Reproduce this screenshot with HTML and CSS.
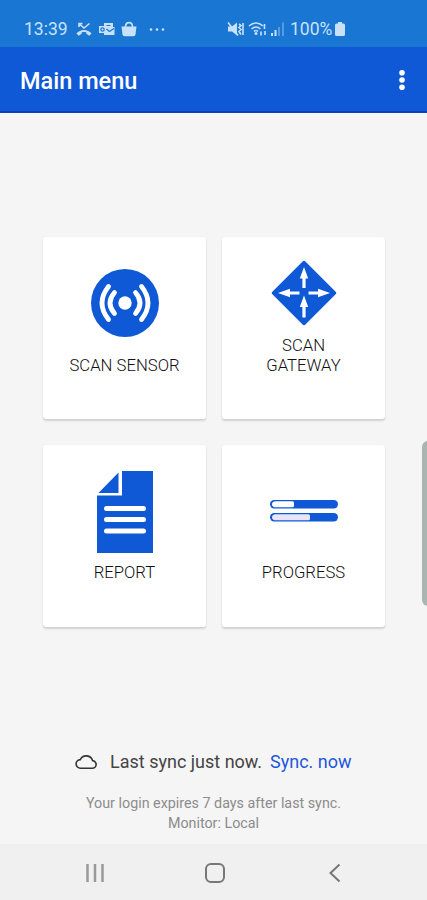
FILE: index.html
```html
<!DOCTYPE html>
<html lang="en">
  <head>
    <meta charset="UTF-8" />
    <meta name="viewport" content="width=device-width, initial-scale=1.0" />
    <title>Main menu</title>
    <link rel="stylesheet" href="styles.css">
  </head>
  <body>
    <div class="status-bar">
      <span class="status-time">13:39</span>
      <svg class="status-left" width="92" height="16" viewBox="0 0 92 16">
        <!-- missed call -->
        <path d="M.5 12.500C4 7.800 12 7.800 15.500 12.500L13.300 14.800L10.300 12.800V11.300Q8 10.700 5.700 11.300V12.800L2.700 14.800Z" />
        <path class="line" d="M3 6V2.500H6.500M3.500 3L8 7L13.500 2.500" />
        <!-- mail -->
        <path d="M28 2h9v4h1.500v8H28v-2h-5V5h5z" />
        <path class="cut" d="M30.500 8l3 2.500L38 7.500M30.500 4.500h4" />
        <circle class="cut" cx="26.500" cy="8.500" r="1.700" />
        <!-- bag -->
        <path d="M45.500 5.500h15l-1 8q-.3 1.800-2 1.800h-9q-1.700 0-2-1.800z" />
        <path class="line" d="M49.500 6c0-5.800 7-5.800 7 0" />
        <circle cx="75" cy="8.500" r="1.300" /><circle cx="81" cy="8.500" r="1.300" /><circle cx="87" cy="8.500" r="1.300" />
      </svg>
      <svg class="status-right" width="60" height="16" viewBox="0 0 60 16">
        <!-- muted -->
        <path d="M1 5.500h4l5-4v13l-5-4H1z" />
        <path class="line" d="M1 1.500l10 13M12 3l2 1.500-2 2 2 2-2 2 2 3M16 2v12" />
        <!-- wifi -->
        <path class="line" d="M22 5q7-6 14 0M24.500 8q4.500-4 9 0M27 10.500q2-2 4 0M37.500 3v5M34 10.500v4M38 10v4" />
        <circle cx="29" cy="12.500" r="1.500" />
        <!-- signal -->
        <path d="M44 12h2v3h-2zM47.500 9h2v6h-2z" />
        <path class="dim" d="M51 6h2v9h-2zM55 1.500h2V15h-2z" />
      </svg>
      <span class="status-percent">100%</span>
      <svg class="battery" width="12" height="16" viewBox="0 0 12 16">
        <path d="M4 1h4v1.500h1.500q1.500 0 1.500 1.500v9.500q0 1.500-1.500 1.500h-7Q1 15 1 13.500V4q0-1.500 1.500-1.500H4z" />
      </svg>
    </div>

    <header class="app-bar">
      <h1>Main menu</h1>
      <svg class="more" width="8" height="24" viewBox="0 0 8 24">
        <circle cx="4" cy="4.700" r="2.800" /><circle cx="4" cy="12" r="2.800" /><circle cx="4" cy="19.300" r="2.800" />
      </svg>
    </header>

    <main class="menu">
      <div class="card">
        <svg class="icon icon-sensor" width="68" height="68" viewBox="0 0 68 68">
          <circle cx="34" cy="34" r="34" />
          <circle class="white" cx="34" cy="34" r="6.700" />
          <path class="wave" d="M23.500 23.500Q14.500 34 23.500 44.500M17.500 17.500Q4.500 34 17.500 50.500M44.500 23.500Q53.500 34 44.500 44.500M50.500 17.500Q63.500 34 50.500 50.500" />
        </svg>
        <div class="label">SCAN SENSOR</div>
      </div>
      <div class="card">
        <svg class="icon" width="66" height="66" viewBox="0 0 66 66">
          <path class="diamond" d="M33 2L64 33L33 64L2 33Z" />
          <path class="white" d="M33 7l4.200 11.500h-2.600V28h-3.200v-9.500h-2.600z" />
          <path class="white" d="M33 35.500l4.200 11.500h-2.600v10.500h-3.200V47h-2.600z" />
          <path class="white" d="M7 33l12-4.200v2.600h9.500v3.200H19v2.600z" />
          <path class="white" d="M59 33l-12-4.200v2.600h-9.500v3.200H47v2.600z" />
        </svg>
        <div class="label">SCAN<br>GATEWAY</div>
      </div>
      <div class="card card-low">
        <svg class="icon" width="56" height="82" viewBox="0 0 56 82">
          <path d="M25 0H56V82H0V24.500H25Z" />
          <path d="M21.500 1.500V22H1.500Z" />
          <path class="rule" d="M9.500 37.500h37M9.500 48.500h37M9.500 60h37" />
        </svg>
        <div class="label">REPORT</div>
      </div>
      <div class="card card-low">
        <svg class="icon icon-progress" width="68" height="22" viewBox="0 0 68 22">
          <rect width="68" height="8.500" rx="4.200" />
          <rect y="13" width="68" height="8.500" rx="4.200" />
          <path class="white" d="M5 1.300H22.500q1.500 0 1.500 1.500v3q0 1.500-1.500 1.500H5q-3-.5-3-3t3-3z" />
          <path class="bar-fill" d="M5 14.300H38.500q1.500 0 1.500 1.500v3q0 1.500-1.500 1.500H5q-3-.5-3-3t3-3z" />
        </svg>
        <div class="label">PROGRESS</div>
      </div>
    </main>

    <footer class="sync">
      <div class="sync-row">
        <svg class="cloud" width="22" height="16" viewBox="0 0 22 16">
          <path d="M5.500 14.200H17a3.800 3.800 0 0 0 .6-7.600A6.600 6.600 0 0 0 5.300 5.600a4.300 4.300 0 0 0 .2 8.600z" />
        </svg>
        <span class="sync-text">Last sync just now.</span>
        <a class="sync-link">Sync. now</a>
      </div>
      <p class="expires">Your login expires 7 days after last sync.</p>
      <p class="monitor">Monitor: Local</p>
    </footer>

    <nav class="nav-bar">
      <svg width="20" height="20" viewBox="0 0 20 20"><path class="recent" d="M2.500 1v18M10 1v18M17.500 1v18" /></svg>
      <svg width="20" height="20" viewBox="0 0 20 20"><rect x="1" y="1" width="18" height="18" rx="5" /></svg>
      <svg width="20" height="20" viewBox="0 0 20 20"><path d="M14.500 1.500L5.500 10l9 8.500" /></svg>
    </nav>

    <div class="edge-handle"></div>
  </body>
</html>
```
FILE: styles.css
```css
* {
  margin: 0;
  padding: 0;
  box-sizing: border-box;
}
body {
  position: relative;
  height: 900px;
  display: flex;
  flex-direction: column;
  overflow: hidden;
  background: #f5f5f5;
  font-family: Roboto, "Liberation Sans", sans-serif;
}
svg {
  display: block;
  flex: none;
}
.status-bar {
  height: 47px;
  padding: 11px 0 0 24px;
  display: flex;
  align-items: center;
  background: #1976d2;
  color: #c9e1f8;
  fill: #c9e1f8;
  font-size: 17.5px;
}
.status-bar .line {
  fill: none;
  stroke: #c9e1f8;
  stroke-width: 1.6;
}
.status-bar .cut {
  fill: none;
  stroke: #1976d2;
  stroke-width: 1.2;
}
.dim {
  opacity: .35;
}
.status-time {
  width: 52px;
}
.status-right {
  margin-left: 59px;
}
.status-percent {
  width: 44px;
  margin-left: 3px;
}
.app-bar {
  height: 66px;
  padding: 0 21px 0 20px;
  display: flex;
  align-items: center;
  justify-content: space-between;
  background: #0f58d6;
  border-bottom: 2px solid #0a3fc0;
}
.app-bar h1 {
  padding-top: 3px;
  color: white;
  font-size: 23.5px;
  font-weight: 500;
}
.more {
  margin-top: 2px;
  fill: white;
}
.menu {
  margin: 124px 0 0 43px;
  display: grid;
  grid-template-columns: repeat(2, 163px);
  grid-auto-rows: 182px;
  gap: 26px 16px;
}
.card {
  padding-bottom: 43px;
  display: flex;
  flex-direction: column;
  align-items: center;
  justify-content: flex-end;
  background: white;
  border-radius: 3px;
  box-shadow: 0 2px 2px rgba(0, 0, 0, .14), 0 0 2px rgba(0, 0, 0, .06);
}
.card-low {
  padding-bottom: 44px;
}
.icon {
  margin-bottom: 10px;
  fill: #0f58d6;
}
.icon-sensor {
  margin-bottom: 19px;
}
.icon-progress {
  margin-bottom: 41px;
}
.white {
  fill: white;
}
.wave {
  fill: none;
  stroke: white;
  stroke-width: 4.8;
  stroke-linecap: round;
}
.diamond {
  stroke: #0f58d6;
  stroke-width: 2.5;
  stroke-linejoin: round;
}
.rule {
  stroke: white;
  stroke-width: 5;
  stroke-linecap: round;
}
.bar-fill {
  fill: #e8e4fa;
}
.label {
  color: #111;
  font-size: 16.7px;
  font-weight: 300;
  line-height: 20px;
  text-align: center;
}
.sync {
  margin-top: 122px;
  color: #8c8c8c;
  font-size: 14.3px;
  line-height: 20px;
  text-align: center;
}
.sync-row {
  padding-left: 75px;
  display: flex;
  align-items: center;
  font-size: 18px;
  line-height: 26px;
}
.cloud {
  fill: none;
  stroke: #333;
  stroke-width: 1.6;
}
.sync-text {
  width: 160px;
  margin-left: 13px;
  color: #444;
  text-align: left;
  white-space: nowrap;
}
.sync-link {
  color: #2357dc;
}
.expires {
  margin-top: 18px;
}
.nav-bar {
  height: 56px;
  margin-top: auto;
  padding: 2px 82px 0 85px;
  display: flex;
  align-items: center;
  justify-content: space-between;
  background: #f0f0f0;
}
.nav-bar svg {
  fill: none;
  stroke: #777;
  stroke-width: 2;
}
.nav-bar .recent {
  stroke: #999;
  stroke-width: 2.5;
}
/* edge panel handle, runs off the right side */
.edge-handle {
  position: absolute;
  top: 441px;
  right: -7px;
  width: 12px;
  height: 165px;
  border-radius: 6px;
  background: #aab5b1;
}
```
